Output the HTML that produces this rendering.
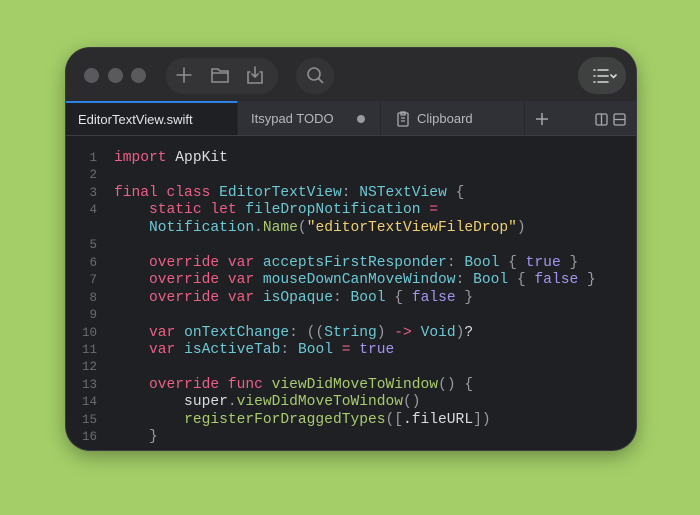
<!DOCTYPE html>
<html><head><meta charset="utf-8"><style>
*{margin:0;padding:0;box-sizing:border-box}
html,body{width:700px;height:515px;overflow:hidden}
body{background:#a4cf68;position:relative;font-family:"Liberation Sans",sans-serif}
.win{position:absolute;left:66px;top:48px;width:570px;height:402px;border-radius:24px;background:#1f2024;overflow:hidden;box-shadow:0 0 0 1px #3a3a3c,0 6px 20px rgba(0,0,0,.35)}
.title{position:absolute;left:0;top:0;width:570px;height:53px;background:#2b2b2d}
.dot{position:absolute;top:20px;width:15px;height:15px;border-radius:50%;background:#5a5a5c}
.pill{position:absolute;background:#343436;border-radius:19px}
.tabs{position:absolute;left:0;top:53px;width:570px;height:35px;background:#303136;border-bottom:1px solid #3c3d42}
.tab{position:absolute;top:0;height:34px;color:#b8b8bc;font-size:13px;line-height:36px;border-right:1px solid #26272b}
.code{position:absolute;left:0;top:102px;font-family:"Liberation Mono",monospace;font-size:14.6px;line-height:17.45px;white-space:pre;color:#dcdcdf}
.ln{position:absolute;left:0;width:31px;text-align:right;color:#6b6c72;font-size:12.5px}
.k{color:#ec5f86}.t{color:#6cc9d4}.f{color:#a9cb6e}.s{color:#f0cf74}.l{color:#a594ee}.p{color:#9a9aa0}
</style></head><body>
<div class="win">
 <div class="title">
  <div class="dot" style="left:18px"></div><div class="dot" style="left:42px"></div><div class="dot" style="left:65px"></div>
  <div class="pill" style="left:100px;top:10px;width:112px;height:36px"></div>
  <div class="pill" style="left:230px;top:10px;width:38px;height:36px"></div>
  <div class="pill" style="left:512px;top:9px;width:48px;height:37px;background:#3f4040"></div>
  <svg style="position:absolute;left:0;top:0" width="570" height="53" fill="none" stroke="#8e8e92" stroke-width="1.6" stroke-linecap="round">
   <path d="M118 20v14M111 27h14"/>
   <path d="M146 21h6l2 2h8v11h-16z M146 25h16"/>
   <path d="M184 24h-2v11h14v-11h-2 M189 19v10 M186 26l3 3 3-3"/>
   <circle cx="248" cy="26" r="6"/><path d="M252.5 30.5l4 4"/>
   <path d="M528 22h1M528 28h1M528 34h1M532 22h10M532 28h10M532 34h10" stroke="#d8d8da"/>
   <path d="M545 27l2.5 2.5 2.5-2.5" stroke="#d8d8da"/>
  </svg>
 </div>
 <div class="tabs">
  <div class="tab" style="left:0;width:172px;background:#1f2024;color:#e6e6e8;padding-left:12px;border-top:2px solid #2a82e4;line-height:33px">EditorTextView.swift</div>
  <div class="tab" style="left:172px;width:143px;padding-left:13px">Itsypad TODO<span style="position:absolute;left:119px;top:14px;width:8px;height:8px;border-radius:50%;background:#9a9a9e"></span></div>
  <div class="tab" style="left:315px;width:144px;padding-left:36px">Clipboard</div>
  <svg style="position:absolute;left:0;top:0" width="570" height="35" fill="none" stroke="#a8a8ac" stroke-width="1.3">
   <rect x="332" y="12" width="10" height="13" rx="1"/><path d="M335 11h4v3h-4z M335 17h4M335 20h4"/>
   <path d="M476 12v12M470 18h12" stroke-width="1.5"/>
   <rect x="530" y="13" width="11" height="11" rx="1.5"/><path d="M535.5 13v11"/>
   <rect x="548" y="13" width="11" height="11" rx="1.5"/><path d="M548 18.5h11"/>
  </svg>
 </div>
 <div class="code">
<div class="ln" style="top:0">1</div><div class="ln" style="top:17.45px">2</div><div class="ln" style="top:34.9px">3</div><div class="ln" style="top:52.35px">4</div><div class="ln" style="top:87.25px">5</div><div class="ln" style="top:104.7px">6</div><div class="ln" style="top:122.15px">7</div><div class="ln" style="top:139.6px">8</div><div class="ln" style="top:157.05px">9</div><div class="ln" style="top:174.5px">10</div><div class="ln" style="top:191.95px">11</div><div class="ln" style="top:209.4px">12</div><div class="ln" style="top:226.85px">13</div><div class="ln" style="top:244.3px">14</div><div class="ln" style="top:261.75px">15</div><div class="ln" style="top:279.2px">16</div>
<div style="position:absolute;left:48px;top:0"><span class="k">import</span> AppKit

<span class="k">final class</span> <span class="t">EditorTextView</span><span class="p">:</span> <span class="t">NSTextView</span> <span class="p">{</span>
    <span class="k">static let</span> <span class="t">fileDropNotification</span> <span class="k">=</span>
    <span class="t">Notification</span><span class="p">.</span><span class="f">Name</span><span class="p">(</span><span class="s">"editorTextViewFileDrop"</span><span class="p">)</span>

    <span class="k">override var</span> <span class="t">acceptsFirstResponder</span><span class="p">:</span> <span class="t">Bool</span> <span class="p">{</span> <span class="l">true</span> <span class="p">}</span>
    <span class="k">override var</span> <span class="t">mouseDownCanMoveWindow</span><span class="p">:</span> <span class="t">Bool</span> <span class="p">{</span> <span class="l">false</span> <span class="p">}</span>
    <span class="k">override var</span> <span class="t">isOpaque</span><span class="p">:</span> <span class="t">Bool</span> <span class="p">{</span> <span class="l">false</span> <span class="p">}</span>

    <span class="k">var</span> <span class="t">onTextChange</span><span class="p">: ((</span><span class="t">String</span><span class="p">)</span> <span class="k">-&gt;</span> <span class="t">Void</span><span class="p">)</span>?
    <span class="k">var</span> <span class="t">isActiveTab</span><span class="p">:</span> <span class="t">Bool</span> <span class="k">=</span> <span class="l">true</span>

    <span class="k">override func</span> <span class="f">viewDidMoveToWindow</span><span class="p">() {</span>
        super<span class="p">.</span><span class="f">viewDidMoveToWindow</span><span class="p">()</span>
        <span class="f">registerForDraggedTypes</span><span class="p">([</span>.fileURL<span class="p">])</span>
    <span class="p">}</span></div>
 </div>
</div>
</body></html>
